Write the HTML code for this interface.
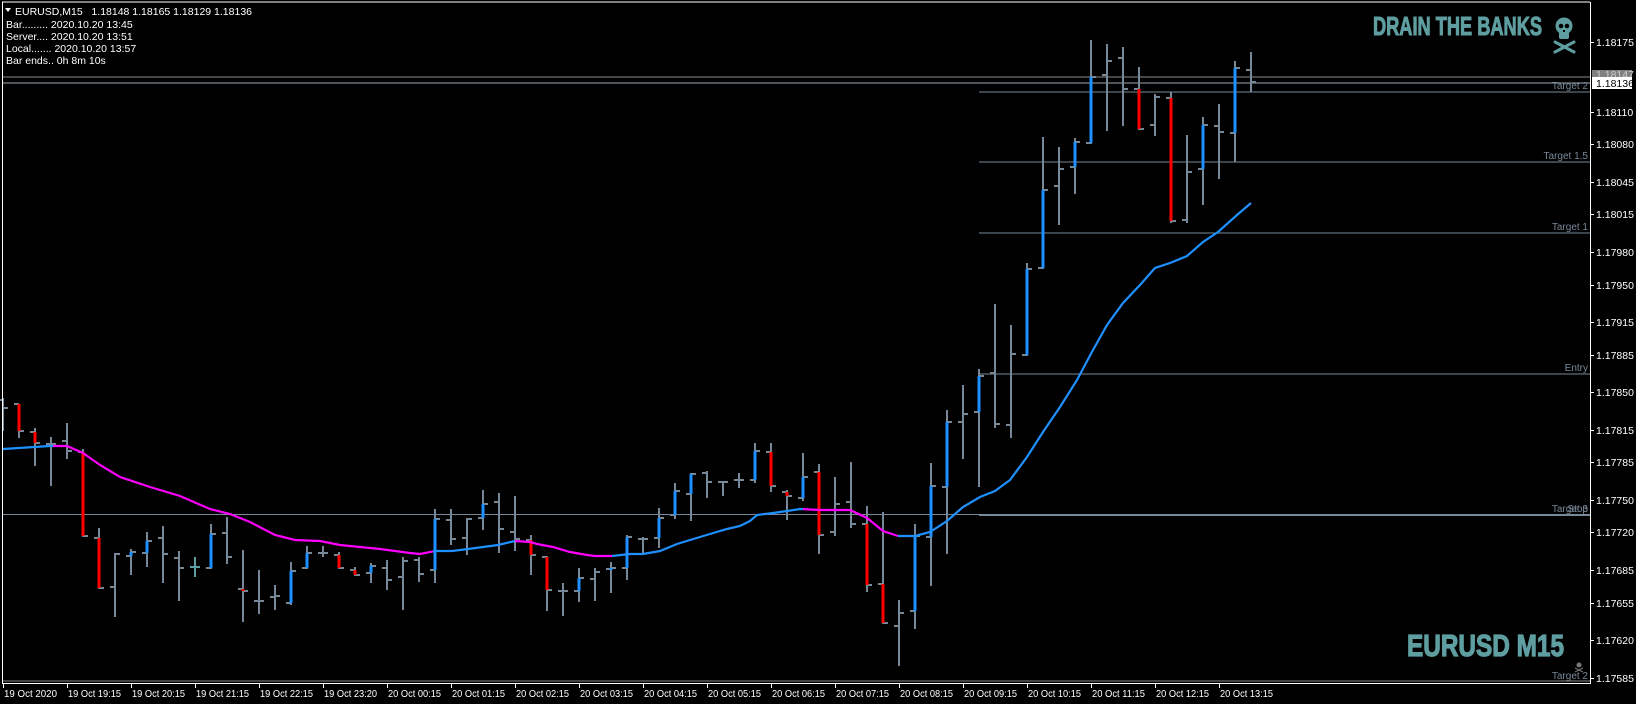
<!DOCTYPE html>
<html><head><meta charset="utf-8">
<style>
html,body{margin:0;padding:0;background:#000;}
body{width:1636px;height:704px;overflow:hidden;position:relative;font-family:"Liberation Sans",sans-serif;}
svg{position:absolute;left:0;top:0;}
</style></head>
<body>
<svg id="c" width="1636" height="704" xmlns="http://www.w3.org/2000/svg" font-family="Liberation Sans, sans-serif">
<rect width="1636" height="704" fill="#000"/>
<g id="lines"></g>
<g id="bars"></g>
<g id="ma"></g>
<g id="axis"></g>
<!-- info -->
<polygon points="5,8 11,8 8,12" fill="#fff"/>
<g fill="#fff" font-size="10.5">
<text x="15" y="15" style="white-space:pre">EURUSD,M15   1.18148 1.18165 1.18129 1.18136</text>
<text x="6" y="28">Bar......... 2020.10.20 13:45</text>
<text x="6" y="40">Server.... 2020.10.20 13:51</text>
<text x="6" y="52">Local....... 2020.10.20 13:57</text>
<text x="6" y="64">Bar ends.. 0h 8m 10s</text>
</g>
<!-- logo -->
<text x="1373" y="35" font-size="26" font-weight="bold" fill="#5f9ea0" stroke="#5f9ea0" stroke-width="1" font-family="Liberation Sans Narrow, Liberation Sans, sans-serif" textLength="169" lengthAdjust="spacingAndGlyphs">DRAIN THE BANKS</text>
<g fill="#5f9ea0">
<ellipse cx="1564" cy="26" rx="8.5" ry="8.5"/>
<rect x="1559" y="30" width="10" height="9" rx="2"/>
</g>
<g fill="#000"><circle cx="1561" cy="26" r="2.3"/><circle cx="1567" cy="26" r="2.3"/><rect x="1563" y="30" width="2" height="2"/></g>
<g stroke="#5f9ea0" stroke-width="3" stroke-linecap="round"><line x1="1555" y1="42" x2="1574" y2="52"/><line x1="1574" y1="42" x2="1555" y2="52"/></g>
<text x="1407" y="656" font-size="31" font-weight="bold" fill="#5f9ea0" stroke="#5f9ea0" stroke-width="1.2" font-family="Liberation Sans Narrow, Liberation Sans, sans-serif" textLength="157" lengthAdjust="spacingAndGlyphs">EURUSD M15</text>
<g fill="#777"><circle cx="1579" cy="665" r="2.5"/><line x1="1575" y1="668" x2="1583" y2="672" stroke="#777"/><line x1="1583" y1="668" x2="1575" y2="672" stroke="#777"/></g>
<!-- frame -->
<line x1="2" y1="2" x2="1590" y2="2" stroke="#fff"/>
<line x1="2.5" y1="2" x2="2.5" y2="683" stroke="#fff"/>
<line x1="1590.5" y1="2" x2="1590.5" y2="684" stroke="#fff"/>
<line x1="2" y1="683.5" x2="1591" y2="683.5" stroke="#fff"/>
</svg>
<script>
var NS="http://www.w3.org/2000/svg";
function el(p,t,a,txt){var e=document.createElementNS(NS,t);for(var k in a)e.setAttribute(k,a[k]);if(txt!=null)e.textContent=txt;p.appendChild(e);return e;}
var G="#778899",B="#1e90ff",R="#ff0000",T="#5f9ea0";
var bars=[
[398,431,400,408,'G'],[404,438,404,431,'R'],[428,466,432,443,'R'],[437,486,444,444,'G'],[423,459,441,451,'G'],
[449,537,452,536,'R'],[528,589,538,588,'R'],[553,617,587,554,'G'],[549,575,556,552,'B'],[532,567,553,541,'B'],
[526,583,538,554,'G'],[551,601,558,568,'G'],[557,577,567,567,'T'],[524,569,568,534,'B'],[517,564,533,557,'G'],
[550,622,589,591,'R'],[570,614,601,601,'G'],[585,610,597,596,'G'],[562,605,603,571,'B'],[546,569,568,553,'B'],
[546,557,553,553,'G'],[552,569,555,568,'R'],[567,576,570,575,'R'],[563,583,573,566,'B'],[560,590,568,580,'G'],
[557,610,577,561,'G'],[557,582,560,574,'G'],[509,583,570,519,'B'],[509,545,520,539,'G'],[518,555,538,519,'G'],
[490,530,518,504,'B'],[493,553,502,529,'G'],[496,551,532,539,'G'],[535,575,540,555,'R'],[556,611,557,590,'R'],
[583,616,591,591,'G'],[568,602,591,578,'B'],[568,601,579,572,'G'],[562,593,569,568,'B'],[535,580,568,537,'B'],
[537,553,539,539,'G'],[508,548,538,518,'B'],[483,519,515,491,'B'],[473,521,494,474,'B'],[471,498,473,482,'G'],
[481,496,482,482,'G'],[473,488,480,480,'G'],[443,483,480,451,'B'],[443,492,452,486,'R'],[490,520,492,496,'R'],
[453,501,498,477,'B'],[464,554,472,535,'R'],[477,536,532,504,'G'],[462,528,502,524,'G'],[506,592,524,585,'R'],
[512,624,584,623,'R'],[600,666,626,613,'G'],[524,629,611,536,'B'],[463,586,537,486,'B'],[410,554,487,422,'B'],
[385,459,422,414,'G'],[369,487,412,376,'B'],[304,428,373,424,'G'],[325,438,425,354,'G'],[263,356,355,269,'B'],
[137,269,268,190,'B'],[147,225,186,169,'G'],[138,194,167,142,'B'],[40,144,143,77,'B'],[44,131,75,61,'G'],
[47,126,58,89,'G'],[67,130,89,129,'R'],[94,136,125,97,'G'],[92,223,98,221,'R'],[135,223,220,172,'G'],
[117,205,169,125,'B'],[104,179,126,132,'G'],[61,162,133,68,'B'],[52,92,70,82,'G']];
var gb=document.getElementById('bars');
bars.forEach(function(b,i){
 var x=3+16*i,H=b[0],L=b[1],O=b[2],C=b[3],c=b[4];
 var wc=c==='T'?T:G;
 el(gb,'rect',{x:x-1,y:H,width:2,height:L-H,fill:wc});
 el(gb,'rect',{x:x-5,y:O-1,width:5,height:2,fill:wc});
 el(gb,'rect',{x:x,y:C-1,width:5,height:2,fill:wc});
 if(c==='B'||c==='R'){var t=Math.min(O,C),h=Math.abs(O-C);el(gb,'rect',{x:x-1.5,y:t,width:3,height:Math.max(h,2),fill:c==='B'?B:R});}
});
var ma=[[3,449],[50,446],[67,446],[83,453],[100,465],[120,477],[150,487],[180,496],[210,509],[230,514],[250,522],[275,535],[295,540],[320,541],[340,545],[380,549],[410,553],[420,554],[435,551],[452,551],[468,549],[483,547],[498,545],[515,541],[530,542],[537,544],[553,547],[570,552],[587,555],[595,556],[612,556],[630,554],[643,554],[660,551],[677,544],[690,540],[710,534],[727,529],[740,526],[750,521],[757,515],[773,513],[787,511],[800,509],[820,510],[850,510],[867,518],[883,531],[898,536],[915,536],[930,532],[947,521],[963,507],[980,497],[995,491],[1010,480],[1027,457],[1043,432],[1060,407],[1077,380],[1093,350],[1107,325],[1123,303],[1140,285],[1155,268],[1170,263],[1187,256],[1203,242],[1218,232],[1237,215],[1251,203]];
var segs=[[0,53,B],[53,433,'#ff00ff'],[433,515,B],[515,612,'#ff00ff'],[612,803,B],[803,898,'#ff00ff'],[898,1300,B]];
var gm=document.getElementById('ma');
function yAt(x){for(var i=0;i<ma.length-1;i++){if(x>=ma[i][0]&&x<=ma[i+1][0]){var t=(x-ma[i][0])/(ma[i+1][0]-ma[i][0]);return ma[i][1]+t*(ma[i+1][1]-ma[i][1]);}}return ma[ma.length-1][1];}
segs.forEach(function(s){var pts=[];var a=Math.max(s[0],3),b=Math.min(s[1],1251);pts.push(a+','+yAt(a));ma.forEach(function(p){if(p[0]>a&&p[0]<b)pts.push(p[0]+','+p[1]);});pts.push(b+','+yAt(b));
 el(gm,'polyline',{points:pts.join(' '),fill:'none',stroke:s[2],'stroke-width':2.2});});
var gl=document.getElementById('lines');
function hl(y,x1,x2,c,w){el(gl,'rect',{x:x1,y:y-(w||1)/2,width:x2-x1,height:w||1,fill:c});}
hl(77,3,1590,'#8a8a8a',1);hl(83,3,1590,'#9aa8b5',1);
hl(92,979,1590,G,1);hl(162,979,1590,G,1);hl(233,979,1590,G,1);hl(374,979,1590,G,1);
hl(514.5,3,1590,G,1);hl(515,979,1590,G,2);hl(681,3,1590,'#8a8a8a',1);
function lbl(y,t){el(gl,'text',{x:1588,y:y,'text-anchor':'end','font-size':10,fill:G},t);}
lbl(89,'Target 2');lbl(159,'Target 1.5');lbl(230,'Target 1');lbl(371,'Entry');lbl(512,'Target 3');lbl(512,'Stop');lbl(679,'Target 2');
var ga=document.getElementById('axis');
var prices=['1.18175','1.18110','1.18080','1.18045','1.18015','1.17980','1.17950','1.17915','1.17885','1.17850','1.17815','1.17785','1.17750','1.17720','1.17685','1.17655','1.17620','1.17585'];
prices.forEach(function(p){var y=42+(1.18175-parseFloat(p))*1e5*1.078;y=Math.round(y);
 el(ga,'rect',{x:1591,y:y,width:3,height:1,fill:'#fff'});
 el(ga,'text',{x:1596,y:y+4,'font-size':10.5,fill:'#fff'},p);});
el(ga,'rect',{x:1592,y:70,width:40,height:9,fill:'#808080'});
el(ga,'text',{x:1596,y:78,'font-size':10.5,fill:'#ccc'},'1.18147');
el(ga,'rect',{x:1592,y:77,width:40,height:12,fill:'#fff'});
el(ga,'text',{x:1596,y:87,'font-size':10.5,fill:'#000'},'1.18136');
var times=['19 Oct 2020','19 Oct 19:15','19 Oct 20:15','19 Oct 21:15','19 Oct 22:15','19 Oct 23:20','20 Oct 00:15','20 Oct 01:15','20 Oct 02:15','20 Oct 03:15','20 Oct 04:15','20 Oct 05:15','20 Oct 06:15','20 Oct 07:15','20 Oct 08:15','20 Oct 09:15','20 Oct 10:15','20 Oct 11:15','20 Oct 12:15','20 Oct 13:15'];
times.forEach(function(t,k){var x=3+64*k;el(ga,'rect',{x:x,y:684,width:1,height:4,fill:'#fff'});
 el(ga,'text',{x:x+1,y:697,'font-size':10.5,fill:'#fff',textLength:53,lengthAdjust:'spacingAndGlyphs'},t);});
</script>
</body></html>
